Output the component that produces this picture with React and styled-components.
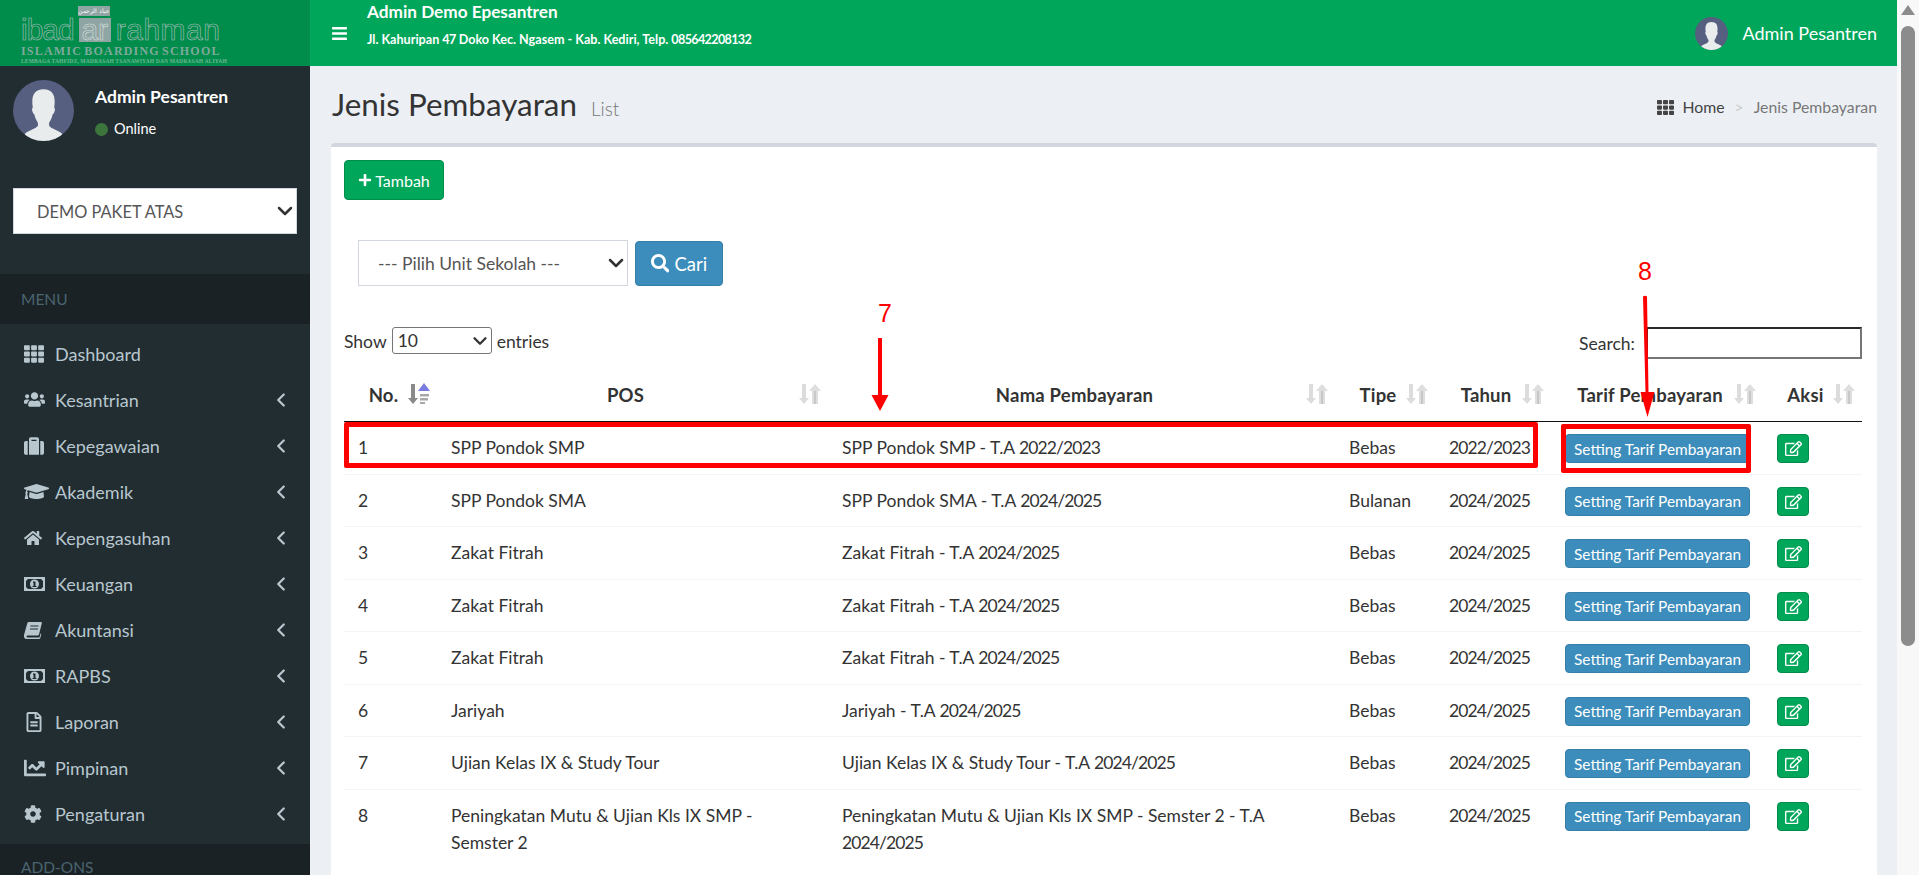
import React from "react";
import styled, { createGlobalStyle } from "styled-components";
import {
  FaBars, FaTh, FaUsers, FaSuitcase, FaGraduationCap, FaHome,
  FaRegFileAlt, FaChartLine, FaCog, FaPlus, FaSearch, FaRegEdit,
} from "react-icons/fa";
import { FiChevronDown, FiChevronLeft } from "react-icons/fi";

const Global = createGlobalStyle`
  html, body { margin: 0; padding: 0; height: 100%; overflow: hidden; }
  * { box-sizing: border-box; }
  body { font-family: Lato, "Noto Sans", sans-serif; color: #333; background: #ecf0f5; }
`;

const Frame = styled.div`
  position: relative;
  display: flex;
  height: 100vh;
  overflow: hidden;
`;

const MainColumn = styled.div`
  flex: 1;
  min-width: 0;
  display: flex;
  flex-direction: column;
`;

const ScrollRail = styled.div`
  width: 22px;
  background: #f8f8f8;
  display: flex;
  flex-direction: column;
  align-items: center;
  padding-top: 5px;
`;

const ScrollArrow = styled.div`
  width: 0;
  height: 0;
  border-left: 7px solid transparent;
  border-right: 7px solid transparent;
  border-bottom: 10px solid #8c8c8c;
`;

const ScrollThumb = styled.div`
  width: 14px;
  height: 620px;
  margin-top: 11px;
  border-radius: 7px;
  background: #8c8c8c;
`;

/* top bar */
const Topbar = styled.header`
  height: 66px;
  flex: none;
  display: flex;
  background: #00a65a;
  color: #fff;
`;

const LogoArea = styled.div`
  width: 310px;
  flex: none;
  background: #008d4c;
  padding: 6px 0 0 21px;
  display: flex;
  flex-direction: column;
`;

const LogoArabic = styled.div`
  width: 32px;
  height: 10px;
  margin-left: 57px;
  background: #8fa5a3;
  color: #fff;
  font-size: 6px;
  line-height: 10px;
  text-align: center;
  font-family: "Noto Sans", sans-serif;
  overflow: hidden;
`;

const LogoWords = styled.div`
  display: flex;
  align-items: center;
  height: 24px;
  margin-top: 2px;
  font-family: "Liberation Sans", sans-serif;
  font-size: 30px;
  line-height: 24px;
  color: transparent;
  -webkit-text-stroke: 0.6px #a9bfb9;
`;

const LogoWord = styled.span`
  letter-spacing: ${(p) => p.$spacing}px;
`;

const LogoAr = styled.span`
  width: 32px;
  height: 24px;
  margin: 0 5px;
  background: #8fa5a3;
  color: #8fa5a3;
  -webkit-text-stroke: 0.6px #d5dedb;
  text-align: center;
`;

const LogoSchool = styled.div`
  margin-top: 3px;
  font-family: "Liberation Serif", serif;
  font-weight: 700;
  font-size: 12px;
  line-height: 12px;
  letter-spacing: 1.2px;
  word-spacing: -2px;
  color: #7fa99b;
  white-space: nowrap;
`;

const LogoTag = styled.div`
  margin-top: 1px;
  font-family: "Liberation Serif", serif;
  font-weight: 700;
  font-size: 5.5px;
  line-height: 7px;
  letter-spacing: 0.15px;
  color: #6fb592;
  white-space: nowrap;
`;

const NavBody = styled.div`
  flex: 1;
  display: flex;
  align-items: center;
  justify-content: space-between;
  padding: 0 20px 0 21px;
`;

const NavLeft = styled.div`
  display: flex;
  align-items: center;
  gap: 19px;
  svg { font-size: 17px; display: block; }
`;

const NavTitle = styled.div`
  font-size: 17.2px;
  font-weight: 700;
  line-height: 22px;
  margin-top: -16px;
`;

const NavAddress = styled.div`
  font-size: 12.6px;
  font-weight: 700;
  line-height: 18px;
  margin-top: 8px;
`;

const NavUser = styled.div`
  display: flex;
  align-items: center;
  gap: 14px;
  font-size: 18px;
`;

/* digits of Lato run wide, pull them in a little */
const Digits = styled.span`
  letter-spacing: -0.052em;
`;

/* sidebar */
const Body = styled.div`
  flex: 1;
  min-height: 0;
  display: flex;
`;

const Sidebar = styled.aside`
  width: 310px;
  flex: none;
  background: #222d32;
  color: #b8c7ce;
  overflow: hidden;
`;

const UserPanel = styled.div`
  height: 122px;
  padding: 14px 13px;
  display: flex;
  gap: 21px;
`;

const UserName = styled.div`
  margin-top: 6px;
  color: #fff;
  font-size: 17.5px;
  font-weight: 700;
  line-height: 22px;
`;

const UserStatus = styled.div`
  display: flex;
  align-items: center;
  gap: 6px;
  margin-top: 10px;
  color: #fff;
  font-size: 14.5px;
  line-height: 22px;
`;

const StatusDot = styled.span`
  width: 13px;
  height: 13px;
  border-radius: 50%;
  background: #3c763d;
`;

const SelectWrap = styled.span`
  position: relative;
  display: block;
  flex: none;
  width: ${(p) => p.$width}px;
  height: ${(p) => p.$height}px;
`;

const SelectArrow = styled(FiChevronDown)`
  position: absolute;
  right: ${(p) => p.$right}px;
  top: 50%;
  transform: translateY(-50%);
  font-size: ${(p) => p.$size}px;
  stroke-width: 2.5;
  color: #333;
  pointer-events: none;
`;

const SchoolWrap = styled(SelectWrap)`
  margin: 0 13px 40px;
`;

const FieldSelect = styled.select`
  display: block;
  width: 100%;
  height: 100%;
  padding: 0 19px;
  appearance: none;
  background: #fff;
  border: 1px solid #d2d6de;
  border-radius: 0;
  color: #555;
  font: 17.5px Lato, sans-serif;
`;

const SchoolSelect = styled(FieldSelect)`
  font-size: 16.4px;
  padding: 0 23px;
`;

const MenuHeader = styled.div`
  height: 50px;
  padding-left: 21px;
  background: #1a2226;
  color: #4b646f;
  font-size: 15.5px;
  line-height: 50px;
`;

const AddonsHeader = styled(MenuHeader)`
  height: 31px;
  padding-top: 16px;
  line-height: 15px;
`;

const MenuList = styled.ul`
  list-style: none;
  margin: 0;
  padding: 6.5px 0 7.5px;
`;

const MenuItem = styled.li`
  height: 46px;
  padding: 0 18px 0 24px;
  display: flex;
  align-items: center;
  font-size: 18px;
`;

const MenuIcon = styled.span`
  width: 31px;
  flex: none;
  display: flex;
  align-items: center;
  font-size: ${(p) => p.$size || 19}px;
`;

const MenuText = styled.span`
  flex: 1;
`;

const MenuChevron = styled(FiChevronLeft)`
  font-size: 22px;
  stroke-width: 2.5;
`;

/* content */
const Content = styled.main`
  flex: 1;
  min-width: 0;
  padding: 0 20px 0 21px;
  display: flex;
  flex-direction: column;
`;

const ContentHeader = styled.div`
  height: 77px;
  flex: none;
  display: flex;
  align-items: flex-start;
  justify-content: space-between;
  padding-top: 18px;
`;

const PageTitle = styled.h1`
  margin: 0 0 0 1px;
  font-size: 31.4px;
  font-weight: 400;
  line-height: 40px;
  color: #333;
`;

const PageSub = styled.small`
  margin-left: 14px;
  font-size: 19px;
  font-weight: 300;
  color: #777;
`;

const Crumbs = styled.div`
  display: flex;
  align-items: center;
  margin-top: 12px;
  font-size: 15.8px;
  line-height: 22px;
  color: #444;
  svg { font-size: 17px; margin-right: 8px; }
`;

const CrumbSep = styled.span`
  margin: 0 10px;
  color: #ccc;
`;

const CrumbNow = styled.span`
  color: #777;
`;

const Box = styled.section`
  flex: 1;
  background: #fff;
  border-top: 4px solid #d2d6de;
  border-radius: 4px 4px 0 0;
  padding: 13px 15px 0 13px;
`;

const Btn = styled.button`
  display: inline-flex;
  align-items: center;
  justify-content: center;
  gap: 5px;
  border: 1px solid ${(p) => (p.$tone === "blue" ? "#367fa9" : "#008d4c")};
  border-radius: 4px;
  background: ${(p) => (p.$tone === "blue" ? "#3c8dbc" : "#00a65a")};
  color: #fff;
  font-family: inherit;
  padding: 0;
`;

const AddBtn = styled(Btn)`
  width: 100px;
  height: 40px;
  gap: 3px;
  font-size: 16px;
  svg { font-size: 14px; }
`;

const SearchBtn = styled(Btn)`
  width: 88px;
  height: 45px;
  margin-top: 1px;
  font-size: 18.5px;
`;

const FilterRow = styled.div`
  display: flex;
  gap: 7px;
  margin: 40px 0 41px 14px;
`;

const TableTools = styled.div`
  height: 41px;
  display: flex;
  justify-content: space-between;
  font-size: 17.5px;
`;

const ShowLabel = styled.label`
  display: flex;
  align-items: center;
  align-self: flex-start;
  gap: 5px;
  height: 27px;
  padding-top: 1px;
`;

const ShowSelect = styled.select`
  display: block;
  width: 100%;
  height: 100%;
  margin-top: -1px;
  padding: 0 0 0 5px;
  appearance: none;
  background: #fff;
  border: 1px solid #767676;
  border-radius: 3px;
  font: 17.5px Lato, sans-serif;
  color: #333;
`;

const SearchLabel = styled.label`
  display: flex;
  align-items: center;
  align-self: flex-start;
  gap: 11px;
  height: 32px;
`;

const SearchInput = styled.input`
  width: 216px;
  height: 32px;
  background: #fff;
  border: 2px solid;
  border-color: #2a2a2a #767676 #767676 #2a2a2a;
`;

const Table = styled.table`
  width: 1518px;
  table-layout: fixed;
  border-collapse: separate;
  border-spacing: 0;
  font-size: 17.5px;
`;

const Th = styled.th`
  position: relative;
  height: 54px;
  padding: 0 28px 0 14px;
  border-bottom: 1px solid #111;
  font-size: 18.5px;
  font-weight: 700;
  letter-spacing: 0.2px;
  text-align: center;
`;

const SortMark = styled.svg`
  position: absolute;
  right: 7px;
  top: 15px;
  width: 23px;
  height: 22px;
  filter: blur(0.4px);
`;

const Td = styled.td`
  padding: 12px 14px 10.5px;
  border-top: ${(p) => (p.$first ? "0" : "1px solid #f4f4f4")};
  line-height: 27px;
  vertical-align: top;
`;

const TariffBtn = styled(Btn)`
  display: flex;
  width: 185px;
  height: 29px;
  font-size: 15.4px;
`;

const EditBtn = styled(Btn)`
  display: flex;
  width: 32px;
  height: 29px;
  font-size: 17px;
`;

/* red notes drawn over the screenshot */
const RowNote = styled.div`
  position: absolute;
  left: 344px;
  top: 422px;
  width: 1194px;
  height: 46px;
  border: 5px solid #f00;
  border-radius: 2px;
`;

const ButtonNote = styled.div`
  position: absolute;
  left: 1561px;
  top: 424px;
  width: 190px;
  height: 49px;
  border: 5px solid #f00;
  border-radius: 2px;
`;

const NoteNumber = styled.div`
  position: absolute;
  left: ${(p) => p.$x}px;
  top: ${(p) => p.$y}px;
  color: #f00;
  font-family: "Liberation Sans", sans-serif;
  font-size: 25px;
  line-height: 28px;
`;

const NoteArrow = styled.svg`
  position: absolute;
  left: 0;
  top: 0;
  width: 1919px;
  height: 875px;
  pointer-events: none;
`;

function MoneyIcon() {
  return (
    <svg width="21" height="14" viewBox="0 0 21 14">
      <path
        fillRule="evenodd"
        fill="currentColor"
        d="M0 0h21v14H0zM4 2L2 4v6l2 2h13l2-2V4l-2-2z"
      />
      <circle cx="10.500" cy="7" r="4.500" fill="currentColor" />
      <path d="M9 4.500h2.500v4.500h1v1H8.500V9h1V5.800H9z" fill="#222d32" />
    </svg>
  );
}

function BookIcon() {
  return (
    <svg width="18" height="18" viewBox="0 0 18 18">
      <path
        fill="currentColor"
        d="M5 1h12c.8 0 1 .6.8 1.300L15 13.500c-.2.8-.8 1-1.500 1H4c-2 0-2 2 0 2h11.500l1-4 .8.5-1 4c-.2.6-.6 1-1.300 1H3c-2.500 0-3.500-2-3-4L3.200 2.500C3.500 1.500 4 1 5 1z"
      />
      <path d="M6.500 5h8M6 8h8" stroke="#222d32" strokeWidth="1" />
    </svg>
  );
}

const menu = [
  ["Dashboard", <FaTh />, false, 20],
  ["Kesantrian", <FaUsers />, true, 21],
  ["Kepegawaian", <FaSuitcase />, true, 20],
  ["Akademik", <FaGraduationCap />, true, 25],
  ["Kepengasuhan", <FaHome />, true, 18],
  ["Keuangan", <MoneyIcon />, true],
  ["Akuntansi", <BookIcon />, true],
  ["RAPBS", <MoneyIcon />, true],
  ["Laporan", <FaRegFileAlt />, true, 20],
  ["Pimpinan", <FaChartLine />, true, 22],
  ["Pengaturan", <FaCog />, true, 18],
];

const columns = [
  ["No.", 93],
  ["POS", 391],
  ["Nama Pembayaran", 507],
  ["Tipe", 100],
  ["Tahun", 116],
  ["Tarif Pembayaran", 212],
  ["Aksi", 99],
];

const rows = [
  ["SPP Pondok SMP", "SPP Pondok SMP - T.A 2022/2023", "Bebas", "2022/2023"],
  ["SPP Pondok SMA", "SPP Pondok SMA - T.A 2024/2025", "Bulanan", "2024/2025"],
  ["Zakat Fitrah", "Zakat Fitrah - T.A 2024/2025", "Bebas", "2024/2025"],
  ["Zakat Fitrah", "Zakat Fitrah - T.A 2024/2025", "Bebas", "2024/2025"],
  ["Zakat Fitrah", "Zakat Fitrah - T.A 2024/2025", "Bebas", "2024/2025"],
  ["Jariyah", "Jariyah - T.A 2024/2025", "Bebas", "2024/2025"],
  ["Ujian Kelas IX & Study Tour", "Ujian Kelas IX & Study Tour - T.A 2024/2025", "Bebas", "2024/2025"],
  ["Peningkatan Mutu & Ujian Kls IX SMP - Semster 2", "Peningkatan Mutu & Ujian Kls IX SMP - Semster 2 - T.A 2024/2025", "Bebas", "2024/2025"],
];

// wraps the long runs of numbers in a string
function withDigits(text) {
  return text.split(/(\d[\d/]+)/).map((part, i) => (i % 2 ? <Digits key={i}>{part}</Digits> : part));
}

function Avatar({ size }) {
  return (
    <svg width={size} height={size} viewBox="0 0 60 60" style={{ flex: "none", display: "block" }}>
      <clipPath id={`face${size}`}>
        <circle cx="30" cy="30" r="30" />
      </clipPath>
      <g clipPath={`url(#face${size})`}>
        <rect width="60" height="60" fill="#565f80" />
        <path
          d="M30 9c-8 0-11 5-11 12 0 2 0 4 .5 6-1 .5-1 3 0 5 .5 1 1 1.500 1.500 2 1 4 2 6 3.500 8v3c-2 3-10 5-13 8v7h37v-7c-3-3-11-5-13-8v-3c1.500-2 2.500-4 3.500-8 .5-.5 1-1 1.500-2 1-2 1-4.500 0-5 .5-2 .5-4 .5-6 0-7-3-12-11-12z"
          fill="#e8ecec"
        />
      </g>
    </svg>
  );
}

function SortIcon({ active }) {
  if (active) {
    return (
      <SortMark viewBox="0 0 23 22">
        <path d="M4 1h4v14h3l-5 6-5-6h3z" fill="#8a8a8a" />
        <path d="M13 11h9v2.500h-9zM13 15h8v2.500h-8zM13 19h5v2h-5z" fill="#a8a8a8" />
        <path d="M17 0l6 8H11z" fill="#7c7ce0" />
      </SortMark>
    );
  }
  return (
    <SortMark viewBox="0 0 23 22">
      <path d="M4 1h4v14h3l-5 6-5-6h3z" fill="#dcdcdc" />
      <path d="M17 1l6 7h-3v13h-6V8h-3z" fill="#dedede" />
      <path d="M16 8h2v13h-2z" fill="#c8c8c8" />
    </SortMark>
  );
}

export default function App() {
  return (
    <Frame>
      <Global />
      <MainColumn>
        <Topbar>
          <LogoArea>
            <LogoArabic>عباد الرحمن</LogoArabic>
            <LogoWords>
              <LogoWord $spacing={-1}>ibad</LogoWord>
              <LogoAr>ar</LogoAr>
              <LogoWord $spacing={0.5}>rahman</LogoWord>
            </LogoWords>
            <LogoSchool>ISLAMIC BOARDING SCHOOL</LogoSchool>
            <LogoTag>LEMBAGA TAHFIDZ, MADRASAH TSANAWIYAH DAN MADRASAH ALIYAH</LogoTag>
          </LogoArea>
          <NavBody>
            <NavLeft>
              <FaBars />
              <div>
                <NavTitle>Admin Demo Epesantren</NavTitle>
                <NavAddress>{withDigits("Jl. Kahuripan 47 Doko Kec. Ngasem - Kab. Kediri, Telp. 085642208132")}</NavAddress>
              </div>
            </NavLeft>
            <NavUser>
              <Avatar size={33} />
              Admin Pesantren
            </NavUser>
          </NavBody>
        </Topbar>
        <Body>
          <Sidebar>
            <UserPanel>
              <Avatar size={61} />
              <div>
                <UserName>Admin Pesantren</UserName>
                <UserStatus>
                  <StatusDot />
                  Online
                </UserStatus>
              </div>
            </UserPanel>
            <SchoolWrap $width={284} $height={46}>
              <SchoolSelect defaultValue="demo">
                <option value="demo">DEMO PAKET ATAS</option>
              </SchoolSelect>
              <SelectArrow $right={0} $size={24} />
            </SchoolWrap>
            <MenuHeader>MENU</MenuHeader>
            <MenuList>
              {menu.map(([label, icon, more, size]) => (
                <MenuItem key={label}>
                  <MenuIcon $size={size}>{icon}</MenuIcon>
                  <MenuText>{label}</MenuText>
                  {more && <MenuChevron />}
                </MenuItem>
              ))}
            </MenuList>
            <AddonsHeader>ADD-ONS</AddonsHeader>
          </Sidebar>
          <Content>
            <ContentHeader>
              <PageTitle>
                Jenis Pembayaran<PageSub>List</PageSub>
              </PageTitle>
              <Crumbs>
                <FaTh />
                Home
                <CrumbSep>&gt;</CrumbSep>
                <CrumbNow>Jenis Pembayaran</CrumbNow>
              </Crumbs>
            </ContentHeader>
            <Box>
              <AddBtn>
                <FaPlus />
                Tambah
              </AddBtn>
              <FilterRow>
                <SelectWrap $width={270} $height={46}>
                  <FieldSelect defaultValue="">
                    <option value="">--- Pilih Unit Sekolah ---</option>
                  </FieldSelect>
                  <SelectArrow $right={0} $size={24} />
                </SelectWrap>
                <SearchBtn $tone="blue">
                  <FaSearch />
                  Cari
                </SearchBtn>
              </FilterRow>
              <TableTools>
                <ShowLabel>
                  Show
                  <SelectWrap $width={100} $height={27}>
                    <ShowSelect defaultValue="10">
                      <option value="10">10</option>
                    </ShowSelect>
                    <SelectArrow $right={1} $size={22} />
                  </SelectWrap>
                  entries
                </ShowLabel>
                <SearchLabel>
                  Search:
                  <SearchInput type="text" />
                </SearchLabel>
              </TableTools>
              <Table>
                <colgroup>
                  {columns.map(([name, width]) => (
                    <col key={name} width={width} />
                  ))}
                </colgroup>
                <thead>
                  <tr>
                    {columns.map(([name], i) => (
                      <Th key={name}>
                        {name}
                        <SortIcon active={i === 0} />
                      </Th>
                    ))}
                  </tr>
                </thead>
                <tbody>
                  {rows.map((row, i) => (
                    <tr key={i}>
                      <Td $first={i === 0}>{i + 1}</Td>
                      {row.map((cell, j) => (
                        <Td key={j} $first={i === 0}>
                          {withDigits(cell)}
                        </Td>
                      ))}
                      <Td $first={i === 0}>
                        <TariffBtn $tone="blue">Setting Tarif Pembayaran</TariffBtn>
                      </Td>
                      <Td $first={i === 0}>
                        <EditBtn>
                          <FaRegEdit />
                        </EditBtn>
                      </Td>
                    </tr>
                  ))}
                </tbody>
              </Table>
            </Box>
          </Content>
        </Body>
      </MainColumn>
      <ScrollRail>
        <ScrollArrow />
        <ScrollThumb />
      </ScrollRail>
      <RowNote />
      <ButtonNote />
      <NoteNumber $x={878} $y={299}>7</NoteNumber>
      <NoteNumber $x={1638} $y={257}>8</NoteNumber>
      <NoteArrow viewBox="0 0 1919 875">
        <path d="M878 338h4v57h6.500L880 411l-8.500-16H878z" fill="#f00" />
        <path d="M1643 296.500q2-1.500 4 0l1.500 95.500h6l-7 25-7-25h5z" fill="#f00" />
      </NoteArrow>
    </Frame>
  );
}
